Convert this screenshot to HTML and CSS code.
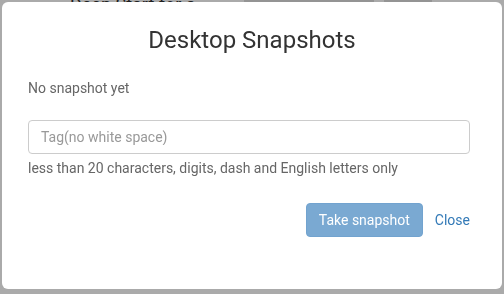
FILE: index.html
```html
<!DOCTYPE html>
<html lang="en">
<head>
    <meta charset="UTF-8">
    <meta name="viewport" content="width=device-width, initial-scale=1.0">
    <title>Desktop Snapshots</title>
    <link rel="stylesheet" href="styles.css">
</head>
<body>
    <!-- page behind the dialog, mostly hidden -->
    <div class="page">
        <span class="page-tab"></span>
        <span class="page-title">Deep Start for a</span>
        <span class="page-field"></span>
        <span class="page-btn"></span>
    </div>

    <div class="modal" role="dialog" aria-labelledby="snap-title">
        <div class="modal-header">
            <h1 id="snap-title">Desktop Snapshots</h1>
        </div>
        <div class="modal-body">
            <p class="empty-text">No snapshot yet</p>
            <input type="text" class="tag-input" placeholder="Tag(no white space)">
            <p class="help-text">less than 20 characters, digits, dash and English letters only</p>
        </div>
        <div class="modal-footer">
            <button class="btn btn-primary" disabled>Take snapshot</button>
            <button class="btn-link">Close</button>
        </div>
    </div>
</body>
</html>
```

FILE: styles.css
```css
body {
    margin: 0;
    background-color: #aaaaaa;
    font-family: Roboto, "Liberation Sans", sans-serif;
    overflow: hidden;
}
.page {
    display: flex;
    align-items: flex-end;
    gap: 10px;
    height: 4px;
    padding-left: 15px;
    overflow: hidden;
}
.page-tab {
    width: 15px;
    height: 2px;
    background-color: #8f8f8f;
}
.page-title {
    margin-left: 30px;
    font-size: 18px;
    line-height: 20px;
    color: #1e1e1e;
    margin-bottom: -11px;
}
.page-field {
    margin-left: 38px;
    width: 130px;
    height: 2px;
    background-color: #949494;
    align-self: flex-start;
}
.page-btn {
    width: 48px;
    height: 2px;
    background-color: #949494;
    align-self: flex-start;
}
.modal {
    position: fixed;
    left: 2px;
    top: 2px;
    width: 500px;
    height: 287px;
    background-color: #fff;
    border-radius: 6px;
}
.modal-header {
    padding-top: 24px;
    text-align: center;
}
.modal-header h1 {
    margin: 0;
    font-size: 24px;
    line-height: 28px;
    font-weight: 400;
    color: #333;
}
.modal-body {
    padding: 24px 32px 0 26px;
}
.empty-text {
    margin: 0 0 22px;
    font-size: 14px;
    line-height: 20px;
    color: #666;
}
.tag-input {
    display: block;
    box-sizing: border-box;
    width: 100%;
    height: 34px;
    padding: 6px 12px;
    border: 1px solid #ccc;
    border-radius: 4px;
    font-family: inherit;
    font-size: 14px;
    color: #555;
    outline: none;
}
.tag-input::placeholder {
    color: #999;
}
.help-text {
    margin: 4px 0 0;
    font-size: 14px;
    line-height: 20px;
    color: #666;
}
.modal-footer {
    display: flex;
    justify-content: flex-end;
    align-items: center;
    padding: 25px 32px 0 26px;
}
.btn {
    height: 34px;
    padding: 6px 12px;
    border: 1px solid transparent;
    border-radius: 4px;
    font-family: inherit;
    font-size: 14px;
    line-height: 20px;
}
.btn-primary {
    background-color: #7aa9d2;
    border-color: #72a3cf;
    color: #fff;
}
.btn-link {
    margin-left: 12px;
    padding: 6px 0;
    border: none;
    background: none;
    font-family: inherit;
    font-size: 14px;
    line-height: 20px;
    color: #337ab7;
    cursor: pointer;
}
```
